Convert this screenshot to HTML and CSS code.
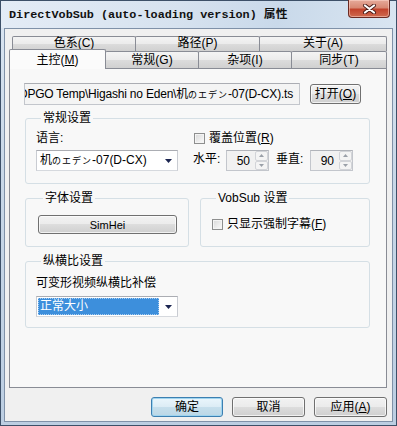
FILE: index.html
```html
<!DOCTYPE html>
<html lang="zh-CN">
<head>
    <meta charset="UTF-8">
    <title>DirectVobSub 属性</title>
    <link rel="stylesheet" href="styles.css">
</head>
<body>
    <div class="window">
        <!-- 标题栏 -->
        <div class="titlebar">
            <span class="title">DirectVobSub (auto-loading version) 属性</span>
            <span class="close-btn">
                <svg width="15" height="10" viewBox="0 0 15 10">
                    <path d="M3 1.5 L12 8.5 M12 1.5 L3 8.5" stroke="#4a1c18" stroke-width="4" stroke-linecap="round"/>
                    <path d="M3 1.5 L12 8.5 M12 1.5 L3 8.5" stroke="#ffffff" stroke-width="2.2" stroke-linecap="round"/>
                </svg>
            </span>
        </div>

        <div class="client">
            <!-- 选项卡 -->
            <div class="tabs">
                <div class="tab-row back">
                    <div class="tab t1">色系(C)</div>
                    <div class="tab t2">路径(P)</div>
                    <div class="tab t3">关于(A)</div>
                </div>
                <div class="tab-row front">
                    <div class="tab active">主控(<u>M</u>)</div>
                    <div class="tab t4">常规(G)</div>
                    <div class="tab t4">杂项(I)</div>
                    <div class="tab t5">同步(T)</div>
                </div>
            </div>

            <div class="panel">
                <div class="path-row">
                    <div class="path-field"><span>D:\POPGO Temp\Higashi no Eden\机<span class="kana">のエデン</span>-07(D-CX).ts</span></div>
                    <button class="btn open-btn">打开(<u>O</u>)</button>
                </div>

                <fieldset class="group general">
                    <legend>常规设置</legend>
                    <div class="general-grid">
                        <span class="label">语言:</span>
                        <label class="check"><span class="box"></span><span>覆盖位置(<u>R</u>)</span></label>
                        <div class="combo">
                            <span class="combo-value">机<span class="kana">のエデン</span>-07(D-CX)</span>
                            <span class="combo-arrow"><svg width="7" height="4" viewBox="0 0 7 4"><polygon points="0,0 7,0 3.5,4" fill="#1b2550"/></svg></span>
                        </div>
                        <div class="pos-row">
                            <span class="pos-label">水平:</span>
                            <div class="spin">
                                <span class="spin-value">50</span>
                                <span class="spin-btns">
                                    <span class="spin-up"><svg width="5" height="3" viewBox="0 0 5 3"><polygon points="0,3 5,3 2.5,0" fill="#9aa0a8"/></svg></span>
                                    <span class="spin-down"><svg width="5" height="3" viewBox="0 0 5 3"><polygon points="0,0 5,0 2.5,3" fill="#9aa0a8"/></svg></span>
                                </span>
                            </div>
                            <span class="pos-label second">垂直:</span>
                            <div class="spin">
                                <span class="spin-value">90</span>
                                <span class="spin-btns">
                                    <span class="spin-up"><svg width="5" height="3" viewBox="0 0 5 3"><polygon points="0,3 5,3 2.5,0" fill="#9aa0a8"/></svg></span>
                                    <span class="spin-down"><svg width="5" height="3" viewBox="0 0 5 3"><polygon points="0,0 5,0 2.5,3" fill="#9aa0a8"/></svg></span>
                                </span>
                            </div>
                        </div>
                    </div>
                </fieldset>

                <div class="group-row">
                    <fieldset class="group font-group">
                        <legend>字体设置</legend>
                        <button class="btn font-btn">SimHei</button>
                    </fieldset>
                    <fieldset class="group vobsub-group">
                        <legend>VobSub 设置</legend>
                        <label class="check"><span class="box"></span><span>只显示强制字幕(<u>F</u>)</span></label>
                    </fieldset>
                </div>

                <fieldset class="group aspect">
                    <legend>纵横比设置</legend>
                    <span class="label">可变形视频纵横比补偿</span>
                    <div class="combo aspect-combo">
                        <span class="combo-value selected">正常大小</span>
                        <span class="combo-arrow"><svg width="7" height="4" viewBox="0 0 7 4"><polygon points="0,0 7,0 3.5,4" fill="#1b2550"/></svg></span>
                    </div>
                </fieldset>
            </div>

            <!-- 底部按钮 -->
            <div class="dialog-buttons">
                <button class="btn default">确定</button>
                <button class="btn">取消</button>
                <button class="btn">应用(<u>A</u>)</button>
            </div>
        </div>
    </div>
</body>
</html>
```

FILE: styles.css
```css
* {
    margin: 0;
    padding: 0;
    box-sizing: border-box;
}

body {
    font-family: 'Liberation Sans', 'Noto Sans CJK SC', sans-serif;
    font-size: 12px;
    line-height: 14px;
    color: #000;
    background: #fff;
}

u {
    text-decoration: underline;
    text-underline-offset: 1px;
}

.kana {
    font-family: 'Noto Sans CJK JP', sans-serif;
    font-size: 9px;
    letter-spacing: 1px;
}

.window {
    width: 397px;
    height: 426px;
    border: 1px solid #3d5068;
    background: linear-gradient(180deg, #dbe6f2 0%, #c9d8e8 40%, #bccee2 100%);
    display: flex;
    flex-direction: column;
}

/* 标题栏 */
.titlebar {
    height: 27px;
    display: flex;
    align-items: flex-start;
    background: linear-gradient(100deg, #e4ecf6 0%, #d6e2ef 45%, #c9d9ea 70%, #d9e5f1 100%);
}

.title {
    font-family: 'Liberation Mono', 'Noto Sans CJK SC', monospace;
    font-weight: bold;
    font-size: 11.8px;
    line-height: 14px;
    padding: 7px 0 0 8px;
    color: #111;
    white-space: nowrap;
}

.close-btn {
    margin-left: auto;
    margin-right: 6px;
    margin-top: -1px;
    width: 42px;
    height: 18px;
    border: 1px solid #6b2a22;
    border-top: none;
    border-radius: 0 0 4px 4px;
    background: linear-gradient(180deg, #e6aa9a 0%, #d88873 45%, #c2432c 55%, #cf6a4f 100%);
    box-shadow: inset 0 0 0 1px rgba(255, 220, 210, 0.5);
    display: flex;
    align-items: center;
    justify-content: center;
}

.client {
    flex: 1;
    margin: 0 3px 3px 3px;
    border: 1px solid #7f91a8;
    background: #f0f0f0;
    padding: 7px 5px 0 4px;
}

/* 选项卡 */
.tab-row {
    display: flex;
}

.tab-row.back {
    padding-left: 3px;
    height: 15px;
}

.tab-row.front {
    height: 17px;
    align-items: flex-end;
}

.tab {
    text-align: center;
    border: 1px solid #898c95;
    border-radius: 2px 2px 0 0;
    background: linear-gradient(180deg, #f4f4f4 0%, #ebebeb 50%, #dcdcdc 50%, #d0d0d0 100%);
    white-space: nowrap;
}

.tab-row.back .tab {
    height: 15px;
    border-bottom: none;
    line-height: 13px;
}

.tab-row.back .tab + .tab,
.tab-row.front .tab + .tab {
    margin-left: -1px;
}

.t1 { width: 124px; }
.t2 { width: 125px; }
.t3 { width: 128px; }

.tab-row.front .tab {
    height: 17px;
    padding-top: 1px;
    border-bottom: none;
}

.t4 { width: 94px; }
.t5 { width: 96px; }

.tab-row.front .tab.active {
    width: 97px;
    height: 20px;
    padding-top: 3px;
    margin-bottom: -1px;
    background: #fbfbfb;
    position: relative;
    z-index: 1;
}

.panel {
    height: 320px;
    border: 1px solid #898c95;
    background: #f8f8f8;
    padding: 14px 16px 0 15px;
}

/* 路径 */
.path-row {
    display: flex;
    align-items: center;
    margin-left: -1px;
}

.path-field {
    width: 276px;
    height: 22px;
    border: 1px solid #c3c6cc;
    border-top-color: #abadb3;
    background: #f4f4f4;
    display: flex;
    justify-content: flex-end;
    align-items: center;
    overflow: hidden;
    padding-right: 6px;
    white-space: nowrap;
    letter-spacing: -0.2px;
}

.path-field > span {
    flex-shrink: 0;
}

.btn {
    font-family: 'Liberation Sans', 'Noto Sans CJK SC', sans-serif;
    font-size: 12px;
    line-height: 14px;
    color: #000;
    border: 1px solid #707070;
    border-radius: 3px;
    background: linear-gradient(180deg, #f2f2f2 0%, #ebebeb 50%, #dddddd 50%, #cfcfcf 100%);
    box-shadow: inset 0 0 0 1px rgba(255, 255, 255, 0.7);
}

.open-btn {
    width: 51px;
    height: 20px;
    margin-left: 10px;
}

/* 分组框 */
.group {
    border: 1px solid #d5dfe5;
    border-radius: 3px;
    min-width: 0;
}

.group legend {
    line-height: 14px;
    padding: 0 2px;
    margin-left: 5px;
}

.general {
    margin-top: 6px;
    padding: 6px 0 12px 10px;
}

.general-grid {
    display: grid;
    grid-template-columns: 142px 1fr;
    column-gap: 15px;
    row-gap: 5px;
}

.label {
    display: block;
}

.check {
    display: flex;
    align-items: center;
    gap: 4px;
}

.box {
    width: 11px;
    height: 11px;
    border: 1px solid #8e8f8f;
    background: linear-gradient(135deg, #d8d8d8 0%, #f1f1f1 70%, #fafafa 100%);
    box-shadow: inset 0 0 0 1px #f4f4f4;
    margin-left: 1px;
}

.combo {
    display: flex;
    width: 142px;
    height: 21px;
    border: 1px solid #abadb3;
    border-color: #abadb3 #c9ccd2 #d6d9de #c9ccd2;
    background: #fff;
}

.combo-value {
    flex: 1;
    margin: 1px;
    padding-left: 2px;
    line-height: 17px;
    white-space: nowrap;
    overflow: hidden;
}

.combo-value.selected {
    background: #3d8fdc;
    color: #fff;
    outline: 1px dotted #a9cdf0;
    outline-offset: -1px;
    flex: none;
    width: 121px;
}

.combo-arrow {
    width: 18px;
    display: flex;
    align-items: center;
    justify-content: center;
    margin-left: auto;
}

.pos-row {
    display: flex;
    align-items: center;
}

.pos-label {
    width: 33px;
    margin-top: -4px;
}

.pos-label.second {
    width: 34px;
    margin-left: 7px;
}

.spin {
    width: 43px;
    height: 21px;
    border: 1px solid #c3c6cc;
    border-top-color: #b0b3b9;
    background: #f1f1f1;
    display: flex;
    align-items: center;
}

.spin-value {
    flex: 1;
    text-align: right;
    padding-right: 5px;
}

.spin-btns {
    width: 13px;
    height: 19px;
    display: flex;
    flex-direction: column;
}

.spin-up,
.spin-down {
    flex: 1;
    border: 1px solid #d2d4d8;
    border-radius: 2px;
    background: #f4f4f4;
    display: flex;
    align-items: center;
    justify-content: center;
}

.group-row {
    display: flex;
    gap: 11px;
    margin-top: 7px;
}

.font-group {
    width: 164px;
    padding: 10px 0 12px 12px;
}

.font-btn {
    width: 139px;
    height: 19px;
    font-size: 11px;
}

.vobsub-group {
    width: 170px;
    padding: 12px 0 0 10px;
}

.aspect {
    margin-top: 7px;
    padding: 8px 0 10px 10px;
}

.aspect .combo {
    margin-top: 6px;
}

/* 底部按钮 */
.dialog-buttons {
    display: flex;
    justify-content: flex-end;
    gap: 9px;
    margin-top: 9px;
}

.dialog-buttons .btn {
    width: 73px;
    height: 20px;
}

.dialog-buttons .btn.default {
    width: 72px;
    border-color: #3c7fb1;
    background: linear-gradient(180deg, #eaf6fc 0%, #dcecf5 50%, #c6dfec 50%, #bcd7e6 100%);
    box-shadow: inset 0 0 0 1px #9fd4ef;
}
```
